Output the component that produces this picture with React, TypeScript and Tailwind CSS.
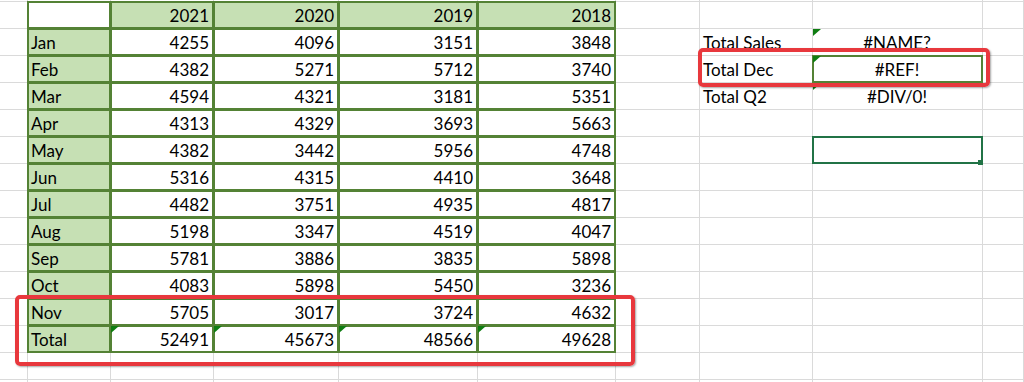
import React from "react";
import clsx from "clsx";

type CellSpec = {
  text?: string;
  align?: "left" | "right" | "center";
  fill?: boolean;
  boxed?: boolean;
  flag?: boolean;
  selected?: boolean;
};

const years = ["2021", "2020", "2019", "2018"];

const data: [string, number[]][] = [
  ["Jan", [4255, 4096, 3151, 3848]],
  ["Feb", [4382, 5271, 5712, 3740]],
  ["Mar", [4594, 4321, 3181, 5351]],
  ["Apr", [4313, 4329, 3693, 5663]],
  ["May", [4382, 3442, 5956, 4748]],
  ["Jun", [5316, 4315, 4410, 3648]],
  ["Jul", [4482, 3751, 4935, 4817]],
  ["Aug", [5198, 3347, 4519, 4047]],
  ["Sep", [5781, 3886, 3835, 5898]],
  ["Oct", [4083, 5898, 5450, 3236]],
  ["Nov", [5705, 3017, 3724, 4632]],
  ["Total", [52491, 45673, 48566, 49628]],
];

const ROWS = 16;
const COLS = 10;

function buildSheet(): CellSpec[][] {
  const sheet: CellSpec[][] = Array.from({ length: ROWS }, () =>
    Array.from({ length: COLS }, () => ({}))
  );

  // table header
  sheet[1][1] = { boxed: true };
  years.forEach((y, i) => {
    sheet[1][i + 2] = { text: y, align: "right", fill: true, boxed: true };
  });

  // months + totals
  data.forEach(([label, vals], r) => {
    const isTotal = label === "Total";
    sheet[r + 2][1] = { text: label, align: "left", fill: true, boxed: true };
    vals.forEach((v, i) => {
      sheet[r + 2][i + 2] = { text: String(v), align: "right", boxed: true, flag: isTotal };
    });
  });

  // summary block on the right
  sheet[2][7] = { text: "Total Sales", align: "left" };
  sheet[2][8] = { text: "#NAME?", align: "center", flag: true };
  sheet[3][7] = { text: "Total Dec", align: "left" };
  sheet[3][8] = { text: "#REF!", align: "center", flag: true, boxed: true };
  sheet[4][7] = { text: "Total Q2", align: "left" };
  sheet[4][8] = { text: "#DIV/0!", align: "center", flag: true };

  // active cell
  sheet[6][8] = { selected: true };

  return sheet;
}

const Cell: React.FC<{ spec: CellSpec }> = ({ spec }) => (
  <div
    className={clsx(
      "relative flex items-center whitespace-nowrap border-r border-b border-[#dadada] pl-[3px] pr-[4px] pt-px",
      spec.align === "right" && "justify-end",
      spec.align === "center" && "justify-center",
      spec.fill ? "bg-[#c6e0b4]" : "bg-white"
    )}
  >
    {/* cell border drawn above neighbouring cells */}
    {(spec.boxed || spec.selected) && (
      <span
        className={clsx(
          "pointer-events-none absolute -inset-px z-[1] border-2",
          spec.selected ? "border-[#217346]" : "border-[#548235]"
        )}
      />
    )}
    {spec.flag && (
      <svg className="absolute left-0 top-0 z-[2]" width="8" height="7" viewBox="0 0 8 7">
        <path d="M0 0H8L0 7Z" fill="#0f7d12" />
      </svg>
    )}
    {spec.text}
    {spec.selected && (
      <span className="absolute right-[-1px] bottom-[-2px] z-[3] size-[5px] bg-[#217346]" />
    )}
  </div>
);

export default function App() {
  const sheet = buildSheet();

  return (
    <div className="relative h-[382px] w-[1024px] overflow-hidden bg-white font-['Lato',sans-serif] text-[17px] text-black">
      <div className="-mt-[25px] grid grid-cols-[28px_83px_103px_125px_139px_138px_84px_113px_170px_1fr] auto-rows-[27px]">
        {sheet.map((row, r) =>
          row.map((spec, c) => <Cell key={`${r}-${c}`} spec={spec} />)
        )}
      </div>

      {/* red call-outs */}
      <div className="pointer-events-none absolute left-[698px] top-[48px] z-20 h-[39px] w-[292px] rounded-[5px] border-4 border-[#e8383d] shadow-[1px_1px_2px_rgba(0,0,0,0.35)]" />
      <div className="pointer-events-none absolute left-[15px] top-[295px] z-20 h-[71px] w-[620px] rounded-[5px] border-4 border-[#e8383d] shadow-[1px_1px_2px_rgba(0,0,0,0.35)]" />
    </div>
  );
}
